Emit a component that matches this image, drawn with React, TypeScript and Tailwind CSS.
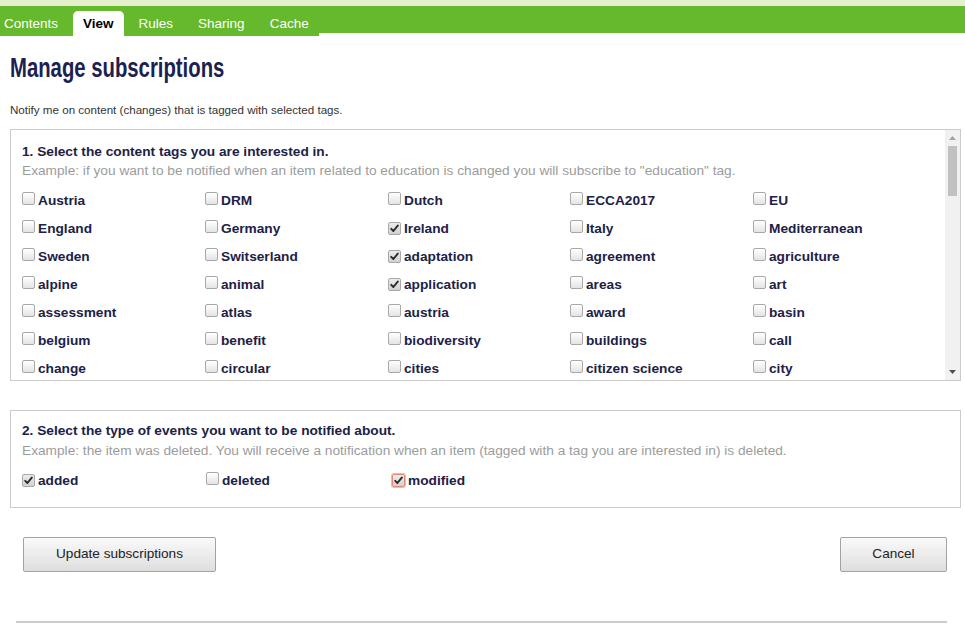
import React from "react";

const tags: [string, boolean][][] = [
  [["Austria", false], ["DRM", false], ["Dutch", false], ["ECCA2017", false], ["EU", false]],
  [["England", false], ["Germany", false], ["Ireland", true], ["Italy", false], ["Mediterranean", false]],
  [["Sweden", false], ["Switserland", false], ["adaptation", true], ["agreement", false], ["agriculture", false]],
  [["alpine", false], ["animal", false], ["application", true], ["areas", false], ["art", false]],
  [["assessment", false], ["atlas", false], ["austria", false], ["award", false], ["basin", false]],
  [["belgium", false], ["benefit", false], ["biodiversity", false], ["buildings", false], ["call", false]],
  [["change", false], ["circular", false], ["cities", false], ["citizen science", false], ["city", false]],
];

const colW = ["w-[183px]", "w-[183px]", "w-[182px]", "w-[183px]", "w-[183px]"];

function Box({ checked, focus }: { checked: boolean; focus?: boolean }) {
  return (
    <span
      className={
        "relative inline-flex shrink-0 items-center justify-center w-[13px] h-[13px] rounded-[2px] border " +
        (focus ? "border-[#e38a74] shadow-[0_0_0_1px_#f4b8a6] " : "border-[#a8a8a8] ") +
        (checked ? "bg-gradient-to-b from-[#ececec] to-[#d2d2d2]" : "bg-gradient-to-b from-[#ffffff] to-[#e4e4e4]")
      }
    >
      {checked && (
        <svg width="9" height="9" viewBox="0 0 9 9" className="block">
          <path d="M1.2 4.8 L3.4 7 L7.8 1.6" fill="none" stroke="#2a2a2a" strokeWidth="1.9" strokeLinecap="round" strokeLinejoin="round" />
        </svg>
      )}
    </span>
  );
}

function Item({ label, checked, w, focus }: { label: string; checked: boolean; w: string; focus?: boolean }) {
  return (
    <div className={"flex items-center h-[28px] " + w}>
      <span className="mt-[-2px]">
        <Box checked={checked} focus={focus} />
      </span>
      <span className="ml-[3px] text-[13.7px] font-bold text-[#1d2146] whitespace-nowrap">{label}</span>
    </div>
  );
}

export default function App() {
  const font = { fontFamily: '"Liberation Sans", Arial, sans-serif' };
  return (
    <div className="w-[965px] h-[639px] bg-white overflow-hidden" style={font}>
      <div className="h-[6px] bg-[#e4efcb]" />
      <div className="flex items-start h-[30px]">
        <div className="w-[319px] h-[30px] bg-[#66b82c] flex items-end gap-[5px]">
          <div className="ml-[-6px] px-[10px] h-[25px] pt-[2px] flex items-center text-[13.5px] text-white">Contents</div>
          <div className="px-[10px] h-[25px] pt-[2px] flex items-center text-[13.5px] font-bold text-black bg-white rounded-t-[5px]">View</div>
          <div className="px-[10px] h-[25px] pt-[2px] flex items-center text-[13.5px] text-white">Rules</div>
          <div className="px-[10px] h-[25px] pt-[2px] flex items-center text-[13.5px] text-white">Sharing</div>
          <div className="px-[10px] h-[25px] pt-[2px] flex items-center text-[13.5px] text-white">Cache</div>
        </div>
        <div className="flex-1 h-[27px] bg-[#66b82c]" />
      </div>

      <div className="pl-[10px] pr-[4px] pt-[15px]">
        <h1 className="h-[34px] text-[28px] leading-[34px] font-bold text-[#1b2150] whitespace-nowrap">
          <span className="inline-block origin-left scale-x-[0.725]">Manage subscriptions</span>
        </h1>
        <p className="mt-[17px] text-[11.6px] leading-[16px] text-[#333333]">
          Notify me on content (changes) that is tagged with selected tags.
        </p>

        <div className="mt-[11px] h-[252px] border border-[#cccccc] flex overflow-hidden">
          <div className="flex-1 overflow-hidden pl-[11px] pt-[13px]">
            <div className="text-[13.7px] leading-[18px] font-bold text-[#1d2146]">
              1. Select the content tags you are interested in.
            </div>
            <div className="mt-[1px] text-[13.7px] leading-[18px] text-[#9c9c9c] whitespace-nowrap">
              Example: if you want to be notified when an item related to education is changed you will subscribe to "education" tag.
            </div>
            <div className="mt-[7px]">
              {tags.map((row, i) => (
                <div key={i} className="flex">
                  {row.map(([l, c], j) => (
                    <Item key={l} label={l} checked={c} w={colW[j]} />
                  ))}
                </div>
              ))}
            </div>
          </div>
          <div className="w-[15px] bg-[#f1f1f1] flex flex-col items-center">
            <div className="h-[15px] flex items-center justify-center">
              <svg width="7" height="4" viewBox="0 0 7 4"><path d="M0 4 L3.5 0 L7 4 Z" fill="#a3a3a3" /></svg>
            </div>
            <div className="w-[9px] h-[50px] bg-[#c1c1c1] mt-[1px]" />
            <div className="flex-1" />
            <div className="h-[15px] flex items-center justify-center mb-[1px]">
              <svg width="7" height="4" viewBox="0 0 7 4"><path d="M0 0 L7 0 L3.5 4 Z" fill="#505050" /></svg>
            </div>
          </div>
        </div>

        <div className="mt-[29px] h-[98px] border border-[#cccccc] pl-[11px] pt-[11px]">
          <div className="text-[13.7px] leading-[18px] font-bold text-[#1d2146]">
            2. Select the type of events you want to be notified about.
          </div>
          <div className="mt-[2px] text-[13.7px] leading-[18px] text-[#9c9c9c] whitespace-nowrap">
            Example: the item was deleted. You will receive a notification when an item (tagged with a tag you are interested in) is deleted.
          </div>
          <div className="mt-[7px] flex">
            <Item label="added" checked={true} w="w-[184px]" />
            <Item label="deleted" checked={false} w="w-[186px]" />
            <Item label="modified" checked={true} w="w-[186px]" focus />
          </div>
        </div>

        <div className="mt-[29px] flex justify-between pl-[13px] pr-[14px]">
          <button className="w-[193px] h-[35px] border border-[#a3a3a3] rounded-[2px] bg-gradient-to-b from-[#fafafa] to-[#dedede] text-[13.6px] text-[#222222]">
            Update subscriptions
          </button>
          <button className="w-[107px] h-[35px] border border-[#a3a3a3] rounded-[2px] bg-gradient-to-b from-[#fafafa] to-[#dedede] text-[13.6px] text-[#222222]">
            Cancel
          </button>
        </div>
      </div>
      <div className="mt-[49px] ml-[16px] w-[931px] h-[2px] bg-[#cccccc]" />
    </div>
  );
}
